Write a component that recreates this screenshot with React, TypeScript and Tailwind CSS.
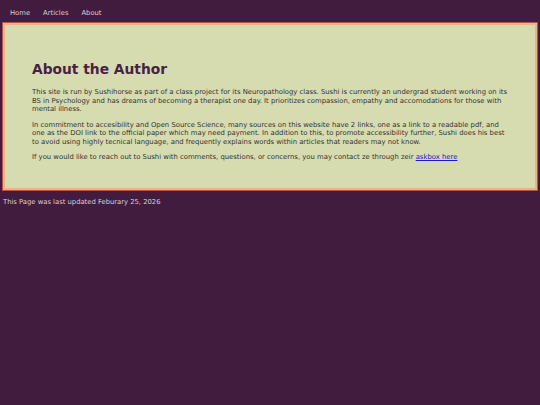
import React from "react";

export default function App() {
  return (
    <div
      className="min-h-[405px] bg-[#421c3f] text-[#333]"
      style={{ fontFamily: '"DejaVu Sans", Verdana, sans-serif' }}
    >
      {/* Nav */}
      <nav className="flex h-[23px] items-center gap-[13px] px-[10px] pt-[3px] text-[6.8px] text-[#d8d0d6]">
        <a href="#">Home</a>
        <a href="#">Articles</a>
        <a href="#">About</a>
      </nav>

      {/* Card */}
      <section className="mx-[3px] h-[167px] border-2 border-[#efb282] bg-[#d6dbb0] px-[27px] pt-[35px] shadow-[0_0_0_1px_#b4553f]">
        <h1 className="mb-[10px] text-[13.8px] font-bold leading-[18px] text-[#4a1f45]">
          About the Author
        </h1>
        <div className="space-y-[7px] text-[6.85px] leading-[8.5px] text-[#333]">
          <p>
            This site is run by Sushihorse as part of a class project for its Neuropathology class. Sushi is
            currently an undergrad student working on its BS in Psychology and has dreams of becoming a
            therapist one day. It prioritizes compassion, empathy and accomodations for those with mental
            illness.
          </p>
          <p>
            In commitment to accesibility and Open Source Science, many sources on this website have 2 links,
            one as a link to a readable pdf, and one as the DOI link to the official paper which may need
            payment. In addition to this, to promote accessibility further, Sushi does his best to avoid using
            highly tecnical language, and frequently explains words within articles that readers may not know.
          </p>
          <p>
            If you would like to reach out to Sushi with comments, questions, or concerns, you may contact ze
            through zeir{" "}
            <a href="#" className="text-[#1a1ad0] underline">
              askbox here
            </a>
          </p>
        </div>
      </section>

      <p className="px-[3px] pt-[7px] text-[6.8px] text-[#d8d0d6]">This Page was last updated Feburary 25, 2026</p>
    </div>
  );
}
